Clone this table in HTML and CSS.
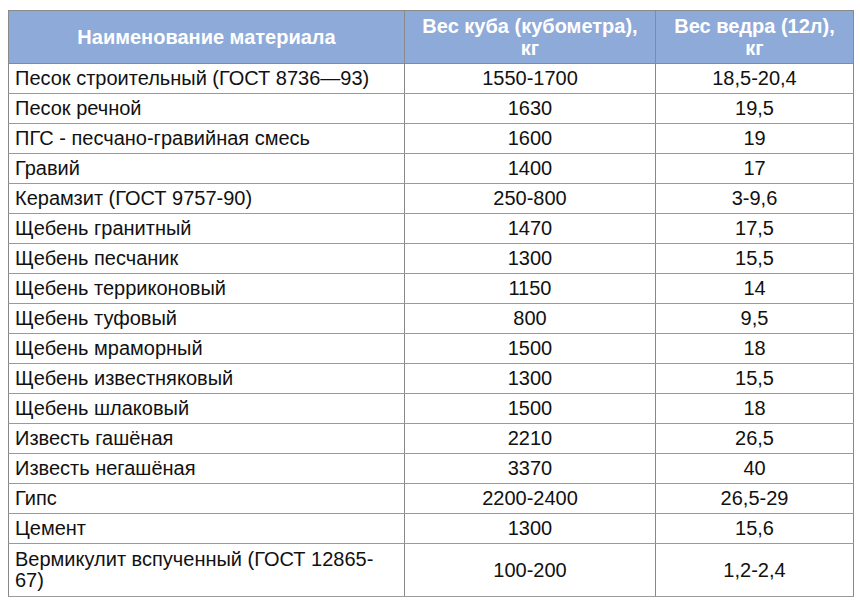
FILE: index.html
```html
<!DOCTYPE html>
<html lang="ru">
<head>
<meta charset="utf-8">
<link rel="stylesheet" href="styles.css">
</head>
<body>
<table class="tbl">
  <colgroup>
    <col class="c1"><col class="c2"><col class="c3">
  </colgroup>
  <thead>
    <tr>
      <th>Наименование материала</th>
      <th>Вес куба (кубометра), кг</th>
      <th>Вес ведра (12л), кг</th>
    </tr>
  </thead>
  <tbody>
    <tr><td>Песок строительный (ГОСТ 8736—93)</td><td>1550-1700</td><td>18,5-20,4</td></tr>
    <tr><td>Песок речной</td><td>1630</td><td>19,5</td></tr>
    <tr><td>ПГС - песчано-гравийная смесь</td><td>1600</td><td>19</td></tr>
    <tr><td>Гравий</td><td>1400</td><td>17</td></tr>
    <tr><td>Керамзит (ГОСТ 9757-90)</td><td>250-800</td><td>3-9,6</td></tr>
    <tr><td>Щебень гранитный</td><td>1470</td><td>17,5</td></tr>
    <tr><td>Щебень песчаник</td><td>1300</td><td>15,5</td></tr>
    <tr><td>Щебень терриконовый</td><td>1150</td><td>14</td></tr>
    <tr><td>Щебень туфовый</td><td>800</td><td>9,5</td></tr>
    <tr><td>Щебень мраморный</td><td>1500</td><td>18</td></tr>
    <tr><td>Щебень известняковый</td><td>1300</td><td>15,5</td></tr>
    <tr><td>Щебень шлаковый</td><td>1500</td><td>18</td></tr>
    <tr><td>Известь гашёная</td><td>2210</td><td>26,5</td></tr>
    <tr><td>Известь негашёная</td><td>3370</td><td>40</td></tr>
    <tr><td>Гипс</td><td>2200-2400</td><td>26,5-29</td></tr>
    <tr><td>Цемент</td><td>1300</td><td>15,6</td></tr>
    <tr class="tall"><td>Вермикулит вспученный (ГОСТ 12865-67)</td><td>100-200</td><td>1,2-2,4</td></tr>
  </tbody>
</table>
</body>
</html>
```

FILE: styles.css
```css
html, body {
  margin: 0;
  padding: 0;
  background: #ffffff;
}
body {
  padding: 10px 0 0 8px;
  font-family: "Liberation Sans", Arial, sans-serif;
}
.tbl {
  border-collapse: collapse;
  table-layout: fixed;
  width: 845px;
  color: #111;
}
.c1 { width: 396px; }
.c2 { width: 251px; }
.c3 { width: 198px; }
.tbl th {
  background: #8eaad9;
  color: #ffffff;
  font-weight: bold;
  font-size: 20px;
  line-height: 22px;
  height: 53px;
  padding: 0 8px;
  text-align: center;
  border: 1px solid #8a8a8a;
  box-sizing: border-box;
}
.tbl td {
  font-size: 20px;
  line-height: 21px;
  height: 30px;
  padding: 0 6px;
  border: 1px solid #9a9a9a;
  border-left-color: #888;
  border-right-color: #888;
  text-align: center;
  box-sizing: border-box;
}
.tbl td:first-child {
  text-align: left;
}
.tbl tr.tall td {
  height: 53px;
}
```
